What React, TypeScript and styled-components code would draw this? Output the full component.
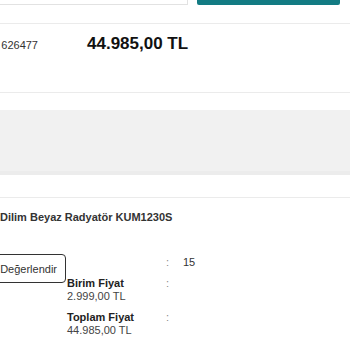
import { Fragment } from "react";
import styled, { createGlobalStyle } from "styled-components";

const GlobalStyle = createGlobalStyle`
  html, body {
    margin: 0;
    padding: 0;
    background: #fff;
    overflow: hidden;
  }
  body {
    font-family: "Liberation Sans", Arial, sans-serif;
    color: #222;
  }
`;

// the screenshot is a window onto a wider order page, cut off on the left and top
const Viewport = styled.div`
  width: 350px;
  height: 350px;
  overflow: hidden;
`;

const Content = styled.div`
  margin-left: -40px;
  width: 390px;
`;

const TopBar = styled.div`
  display: flex;
  align-items: flex-end;
  gap: 9px;
  height: 35px;
  margin-top: -30px;
`;

const SearchBox = styled.div`
  width: 228px;
  height: 34px;
  border: 1px solid #e2e2e2;
  border-top: none;
  box-sizing: border-box;
  background: #fff;
`;

const TealButton = styled.div`
  width: 143px;
  height: 35px;
  background: #137b83;
  border-radius: 0 0 2px 2px;
`;

const Divider = styled.div<{ $top: number }>`
  margin-top: ${(p) => p.$top}px;
  height: 1px;
  background: #ebebeb;
`;

const PriceRow = styled.div`
  display: grid;
  grid-template-columns: 78px 49px auto;
  align-items: start;
  height: 68px;
  padding-top: 10px;
  box-sizing: border-box;
`;

const OrderCode = styled.div`
  margin-top: 5px;
  display: flex;
  justify-content: flex-end;
  font-size: 11px;
  line-height: 13px;
  color: #333;
  white-space: nowrap;
`;

const Price = styled.div`
  grid-column: 3;
  font-size: 17px;
  line-height: 20px;
  font-weight: bold;
  color: #111;
`;

const GrayBand = styled.div`
  margin-top: 17px;
  height: 61px;
  background: #f1f1f1;
  border-bottom: 4px solid #ececec;
`;

const ProductTitle = styled.div`
  margin-top: 13px;
  padding-left: 40px;
  font-size: 11px;
  line-height: 13px;
  font-weight: bold;
  color: #333;
  white-space: nowrap;
`;

const DetailRow = styled.div`
  display: flex;
  align-items: flex-start;
  margin-top: 30px;
`;

const ButtonCol = styled.div`
  width: 107px;
  display: flex;
  justify-content: flex-end;
  padding-right: 1px;
  box-sizing: border-box;
`;

const RateButton = styled.button`
  width: 74px;
  height: 29px;
  padding: 0 8px 0 0;
  border: 1px solid #333;
  border-radius: 4px;
  background: #fff;
  font-family: "Liberation Sans", Arial, sans-serif;
  font-size: 11px;
  color: #333;
  text-align: right;
  position: relative;
  z-index: 1;
`;

const InfoGrid = styled.div`
  display: grid;
  grid-template-columns: 99px 17px auto;
  row-gap: 8px;
  padding-top: 2px;
  font-size: 11px;
  line-height: 13px;
`;

const Label = styled.div`
  font-weight: bold;
  color: #222;
  white-space: nowrap;
`;

const Value = styled.div<{ $dark?: boolean }>`
  color: ${(p) => (p.$dark ? "#333333" : "#444444")};
  white-space: nowrap;
`;

const Colon = styled.div`
  color: #8a8a8a;
`;

const rows = [
  { label: "", value: "15", inline: true },
  { label: "Birim Fiyat", value: "2.999,00 TL" },
  { label: "Toplam Fiyat", value: "44.985,00 TL" },
];

export default function App() {
  return (
    <Viewport>
      <GlobalStyle />
      <Content>
        <TopBar>
          <SearchBox />
          <TealButton />
        </TopBar>
        <Divider $top={18} />
        <PriceRow>
          <OrderCode>626477</OrderCode>
          <Price>44.985,00 TL</Price>
        </PriceRow>
        <Divider $top={0} />
        <GrayBand />
        <Divider $top={22} />
        <ProductTitle>Dilim Beyaz Radyatör KUM1230S</ProductTitle>
        <DetailRow>
          <ButtonCol>
            <RateButton>Değerlendir</RateButton>
          </ButtonCol>
          <InfoGrid>
            {rows.map((r) =>
              r.inline ? (
                <Fragment key={r.value}>
                  <div />
                  <Colon>:</Colon>
                  <Value $dark>{r.value}</Value>
                </Fragment>
              ) : (
                <Fragment key={r.value}>
                  <div>
                    <Label>{r.label}</Label>
                    <Value>{r.value}</Value>
                  </div>
                  <Colon>:</Colon>
                  <div />
                </Fragment>
              )
            )}
          </InfoGrid>
        </DetailRow>
      </Content>
    </Viewport>
  );
}
